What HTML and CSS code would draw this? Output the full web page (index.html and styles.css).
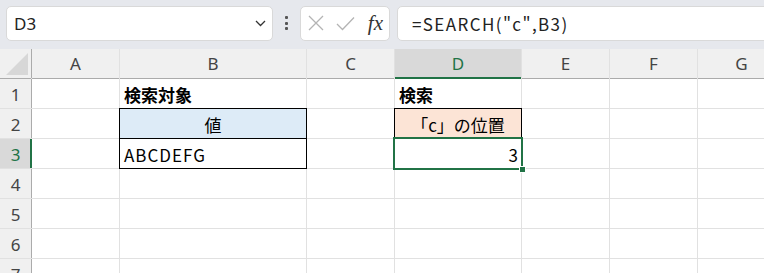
FILE: index.html
```html
<!DOCTYPE html>
<html lang="ja">
<head>
  <meta charset="UTF-8" />
  <title>SEARCH</title>
  <link rel="stylesheet" href="styles.css">
</head>
<body>

  <!-- Formula bar -->
  <div class="toolbar">
    <div class="namebox">
      <span class="ref">D3</span>
      <svg class="chevron" width="11" height="7" viewBox="0 0 11 7"><path d="M1 1 L5.5 5.5 L10 1" fill="none" stroke="#333" stroke-width="1.3"/></svg>
    </div>
    <div class="dots"><i></i><i></i><i></i></div>
    <div class="fxbox">
      <svg width="16" height="16" viewBox="0 0 16 16"><path d="M1 1 L15 15 M15 1 L1 15" stroke="#b4b4b4" stroke-width="1.3" fill="none"/></svg>
      <svg width="19" height="15" viewBox="0 0 19 15"><path d="M1 8 L6.5 13.5 L18 1.5" stroke="#b4b4b4" stroke-width="1.3" fill="none"/></svg>
      <span class="fx">fx</span>
    </div>
    <div class="formula">=SEARCH("c",B3)</div>
  </div>

  <!-- Sheet -->
  <div class="sheet">
    <div class="corner"><svg width="22" height="22" viewBox="0 0 22 22"><polygon points="22,0 22,22 0,22" fill="#d7d7d7"/></svg></div>
    <div class="colhead">A</div>
    <div class="colhead">B</div>
    <div class="colhead">C</div>
    <div class="colhead active">D</div>
    <div class="colhead">E</div>
    <div class="colhead">F</div>
    <div class="colhead">G</div>

    <div class="rowhead">1</div>
    <div class="cell"></div>
    <div class="cell bold">検索対象</div>
    <div class="cell"></div>
    <div class="cell bold">検索</div>
    <div class="cell"></div><div class="cell"></div><div class="cell"></div>

    <div class="rowhead">2</div>
    <div class="cell"></div>
    <div class="cell boxed blue center">値</div>
    <div class="cell"></div>
    <div class="cell boxed peach center">「c」の位置</div>
    <div class="cell"></div><div class="cell"></div><div class="cell"></div>

    <div class="rowhead active">3</div>
    <div class="cell"></div>
    <div class="cell boxed latin">ABCDEFG</div>
    <div class="cell"></div>
    <div class="cell selected right latin">3</div>
    <div class="cell"></div><div class="cell"></div><div class="cell"></div>

    <div class="rowhead">4</div>
    <div class="cell"></div><div class="cell"></div><div class="cell"></div><div class="cell"></div><div class="cell"></div><div class="cell"></div><div class="cell"></div>
    <div class="rowhead">5</div>
    <div class="cell"></div><div class="cell"></div><div class="cell"></div><div class="cell"></div><div class="cell"></div><div class="cell"></div><div class="cell"></div>
    <div class="rowhead">6</div>
    <div class="cell"></div><div class="cell"></div><div class="cell"></div><div class="cell"></div><div class="cell"></div><div class="cell"></div><div class="cell"></div>
    <div class="rowhead">7</div>
    <div class="cell"></div><div class="cell"></div><div class="cell"></div><div class="cell"></div><div class="cell"></div><div class="cell"></div><div class="cell"></div>
  </div>

</body>
</html>
```

FILE: styles.css
```css
body {
  margin: 0;
  width: 764px;
  height: 273px;
  overflow: hidden;
  background: #fff;
  font-family: "Noto Sans CJK JP", "Noto Sans", sans-serif;
  color: #000;
}
.toolbar {
  display: flex;
  align-items: center;
  height: 49px;
  padding: 0 0 3px 6px;
  box-sizing: border-box;
  background: #e6e8ed;
  overflow: hidden;
}
.namebox, .fxbox, .formula {
  height: 35px;
  background: #fff;
  border: 1px solid #d9d9d9;
  border-radius: 5px;
  box-sizing: border-box;
  display: flex;
  align-items: center;
}
.namebox {
  width: 267px;
  padding: 0 6px 0 7px;
  justify-content: space-between;
}
.ref {
  font-family: "Noto Sans", sans-serif;
  font-size: 17px;
  color: #222;
}
.dots {
  width: 27px;
  display: flex;
  flex-direction: column;
  align-items: center;
  gap: 2.5px;
}
.dots i {
  width: 3px;
  height: 3px;
  background: #555;
  border-radius: 1px;
}
.fxbox {
  width: 90px;
  padding: 0 5px 0 7px;
  justify-content: space-between;
}
.fx {
  font-family: "Liberation Serif", serif;
  font-style: italic;
  font-size: 21px;
  color: #333;
  padding-right: 1px;
}
.formula {
  flex: 1;
  margin-left: 7px;
  margin-right: -8px;
  padding-left: 14px;
  font-size: 17px;
  letter-spacing: 1.4px;
  color: #222;
}
.sheet {
  display: grid;
  grid-template-columns: 31px 87px 186px 87px 126px 87px 87px 87px;
  grid-auto-rows: 29px;
  gap: 1px;
  background: #e1e1e1;
}
.corner {
  background: #f0f0f0;
  display: flex;
  align-items: flex-end;
  justify-content: flex-end;
  padding: 0 3px 3px 0;
  box-shadow: 0 1px 0 #ababab, 1px 0 0 #ababab;
}
.colhead {
  background: #f0f0f0;
  box-shadow: 0 1px 0 #ababab;
  font-family: "Noto Sans", sans-serif;
  font-size: 17px;
  color: #444;
  display: flex;
  align-items: center;
  justify-content: center;
}
.colhead.active {
  background: #d9d9d9;
  color: #217346;
  box-shadow: 0 1px 0 #217346, inset 0 -1px 0 #217346;
}
.rowhead {
  background: #f0f0f0;
  box-shadow: 1px 0 0 #ababab;
  font-family: "Noto Sans", sans-serif;
  font-size: 17px;
  color: #444;
  display: flex;
  align-items: center;
  justify-content: center;
  padding-top: 2px;
}
.rowhead.active {
  background: #d9d9d9;
  color: #217346;
  box-shadow: 1px 0 0 #217346, inset -1px 0 0 #217346;
}
.cell {
  background: #fff;
  display: flex;
  align-items: center;
  padding: 2px 4px 0;
  font-size: 17px;
  white-space: nowrap;
}
.bold { font-weight: 700; }
.center { justify-content: center; }
.right { justify-content: flex-end; }
.latin { letter-spacing: 1px; }
.boxed { outline: 1px solid #000; }
.blue { background: #ddebf7; }
.peach { background: #fce4d6; }
.selected {
  position: relative;
  z-index: 1;
  outline: 2px solid #217346;
  padding-right: 2px;
}
.selected::after {
  content: "";
  position: absolute;
  right: -5px;
  bottom: -5px;
  width: 5px;
  height: 5px;
  background: #217346;
  border: 1px solid #fff;
}
```
